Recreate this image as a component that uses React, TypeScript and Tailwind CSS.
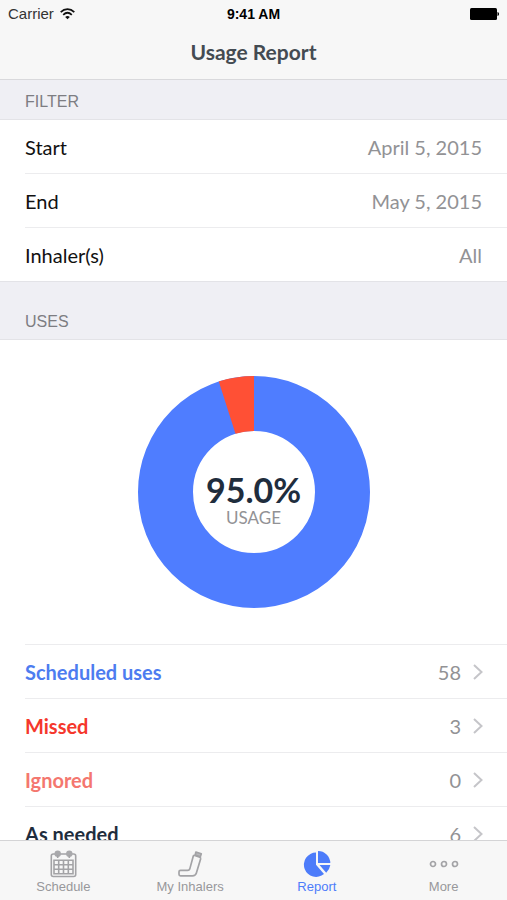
const filters = [
  { label: "Start", value: "April 5, 2015" },
  { label: "End", value: "May 5, 2015" },
  { label: "Inhaler(s)", value: "All" },
];

const uses = [
  { label: "Scheduled uses", value: 58, color: "text-[#4d7cf0]" },
  { label: "Missed", value: 3, color: "text-[#f5372c]" },
  { label: "Ignored", value: 0, color: "text-[#f4776f]" },
  { label: "As needed", value: 6, color: "text-[#1f2d3d]" },
];

const tabs = [
  { label: "Schedule", icon: <CalendarIcon /> },
  { label: "My Inhalers", icon: <InhalerIcon /> },
  { label: "Report", icon: <PieIcon />, active: true },
  { label: "More", icon: <MoreIcon /> },
];

export default function App() {
  return (
    <div className="flex h-screen flex-col overflow-hidden bg-white font-['Lato',sans-serif]">
      <header className="shrink-0 border-b border-[#d9d9dc] bg-[#f7f7f7]">
        <StatusBar />
        <h1 className="pt-2 pb-[11px] text-center text-[21px] leading-8 font-bold text-[#444b52]">
          Usage Report
        </h1>
      </header>

      <main className="min-h-0 flex-1 overflow-hidden">
        <SectionTitle title="FILTER" className="pt-[10px]" />
        <ul className="pl-[25px]">
          {filters.map((f) => (
            <FilterRow key={f.label} data={f} />
          ))}
        </ul>

        <SectionTitle title="USES" className="border-t pt-7" />
        <UsageChart />
        <ul className="pl-[25px]">
          {uses.map((u) => (
            <UseRow key={u.label} data={u} />
          ))}
        </ul>
      </main>

      <nav className="grid h-[60px] shrink-0 grid-cols-4 border-t border-[#d4d4d6] bg-[#f7f7f7]">
        {tabs.map((t) => (
          <Tab key={t.label} data={t} />
        ))}
      </nav>
    </div>
  );
}

function StatusBar() {
  return (
    <div className="grid h-7 grid-cols-3 items-center px-2 font-['Liberation_Sans',sans-serif] text-sm text-black">
      <div className="flex items-center gap-[6px]">
        <span className="text-[15px] text-[#333]">Carrier</span>
        <svg width="15" height="12" viewBox="0 0 15 12" fill="none" stroke="#111" strokeWidth="1.7">
          <path d="M.7 4.2C4.7.2 10.3.2 14.3 4.2M3.2 6.8C5.8 4.3 9.2 4.3 11.8 6.8" />
          <path d="M7.5 11.3 5.2 9C6.5 7.7 8.5 7.7 9.8 9Z" fill="#111" stroke="none" />
        </svg>
      </div>
      <div className="text-center font-bold">9:41 AM</div>
      <svg className="justify-self-end" width="29" height="12" viewBox="0 0 29 12">
        <rect x="0" y="0" width="27" height="12" rx="1.5" />
        <path d="M27.500 4c2 .5 2 3.500 0 4z" />
      </svg>
    </div>
  );
}

function SectionTitle({ title, className }: { title: string; className: string }) {
  return (
    <h2
      className={`border-b border-[#e3e3e7] bg-[#efeff4] px-[25px] pb-[5px] font-['Liberation_Sans',sans-serif] text-base leading-6 text-[#7d7d82] ${className}`}
    >
      {title}
    </h2>
  );
}

function FilterRow({ data }) {
  return (
    <li className="border-b border-[#ececee] last:border-b-0">
      <button className="flex h-[53px] w-full items-center justify-between pr-[25px] text-xl">
        <span className="text-[#111]">{data.label}</span>
        <span className="text-[#929295]">{data.value}</span>
      </button>
    </li>
  );
}

function UseRow({ data }) {
  return (
    <li className="border-t border-[#ececee]">
      <button className="flex h-[53px] w-full items-center pr-6 text-xl">
        <span className={`flex-1 text-left font-bold ${data.color}`}>{data.label}</span>
        <span className="text-[#929295]">{data.value}</span>
        <svg className="ml-3" width="10" height="16" viewBox="0 0 10 16" fill="none" stroke="#c5c5c9" strokeWidth="2">
          <path d="M1 1 8.500 8 1 15" />
        </svg>
      </button>
    </li>
  );
}

function UsageChart() {
  return (
    <div className="relative flex justify-center py-[35px]">
      <svg width="234" height="234" viewBox="-117 -117 234 234">
        <circle r="88.5" fill="none" stroke="#4f7dff" strokeWidth="55" />
        <path d="M0-116A116 116 0 0 0-35.200-110.500L-18.500-58.200A61 61 0 0 1 0-61Z" fill="#ff5035" />
      </svg>
      <div className="absolute inset-0 flex flex-col items-center justify-center pt-4">
        <span className="text-[34px] leading-9 font-bold text-[#1f2d3d]">95.0%</span>
        <span className="text-[17px] leading-5 text-[#929295]">USAGE</span>
      </div>
    </div>
  );
}

function Tab({ data }) {
  return (
    <button
      className={`flex flex-col items-center pt-2 font-['Liberation_Sans',sans-serif] text-[13px] leading-4 ${
        data.active ? "text-[#4d7cfa]" : "text-[#98989b]"
      }`}
    >
      <span className="flex h-[30px] items-center">{data.icon}</span>
      {data.label}
    </button>
  );
}

function CalendarIcon() {
  return (
    <svg width="28" height="28" viewBox="0 0 28 28" fill="none" stroke="#a3a3a6" strokeWidth="1.6">
      <rect x="2.300" y="4" width="24.400" height="22.500" rx="2" />
      <path d="M5 10.300h19v13.500h-19zM9.700 10.300v13.500M14.500 10.300v13.500M19.300 10.300v13.500M5 14.800h19M5 19.300h19" />
      <circle cx="8.700" cy="3.700" r="3.200" fill="#a9a9ac" stroke="none" />
      <circle cx="20.300" cy="3.700" r="3.200" fill="#a9a9ac" stroke="none" />
      <path d="M8.700 5v3M20.300 5v3" />
    </svg>
  );
}

function InhalerIcon() {
  return (
    <svg width="26" height="28" viewBox="0 0 26 28" fill="none" stroke="#a3a3a6" strokeWidth="1.700" strokeLinejoin="round">
      <path d="M16.300 6Q16.800 5.200 17.800 5.500L22.800 7.200Q23.900 7.700 23.600 8.900L19.300 23.300Q18.500 25.800 15.500 25.800H3.500Q2 25.800 2 24.300V21.800Q2 20.300 3.500 20.300H10.500Q12.600 20.300 13 18.100Z" />
      <path d="M18.200 5 18.900 2 24.300 3.700 23.300 6.800Z" fill="#b8b8bb" />
    </svg>
  );
}

function PieIcon() {
  return (
    <svg width="28" height="28" viewBox="0 0 28 28" fill="currentColor">
      <path d="M13 2.500V14.800L21 24A12.200 12.200 0 1 1 13 2.500Z" />
      <path d="M15 1A12.300 12.300 0 0 1 27.300 13H15Z" />
      <path d="M16.500 15H27.300A12.500 12.500 0 0 1 23.200 22.700Z" />
    </svg>
  );
}

function MoreIcon() {
  return (
    <svg width="30" height="8" viewBox="0 0 30 8" fill="none" stroke="#a3a3a6" strokeWidth="1.700">
      <circle cx="4" cy="4" r="2.500" />
      <circle cx="15" cy="4" r="2.500" />
      <circle cx="26" cy="4" r="2.500" />
    </svg>
  );
}
